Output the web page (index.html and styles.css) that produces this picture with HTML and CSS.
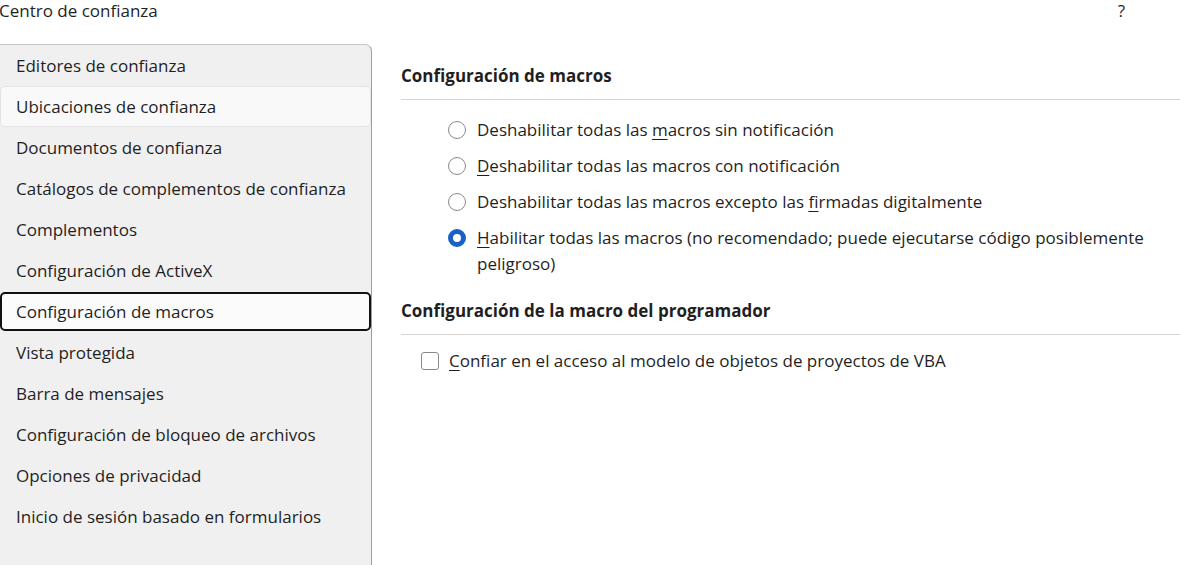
FILE: index.html
```html
<!DOCTYPE html>
<html lang="es">
<head>
<meta charset="utf-8">
<title>Centro de confianza</title>
<link rel="stylesheet" href="styles.css">
</head>
<body>
<div class="window">
  <header class="titlebar">
    <span class="title">Centro de confianza</span>
    <span class="help">?</span>
  </header>
  <div class="content">
    <nav class="sidebar">
      <div class="nav-item">Editores de confianza</div>
      <div class="nav-item hover">Ubicaciones de confianza</div>
      <div class="nav-item">Documentos de confianza</div>
      <div class="nav-item">Catálogos de complementos de confianza</div>
      <div class="nav-item">Complementos</div>
      <div class="nav-item">Configuración de ActiveX</div>
      <div class="nav-item selected">Configuración de macros</div>
      <div class="nav-item">Vista protegida</div>
      <div class="nav-item">Barra de mensajes</div>
      <div class="nav-item">Configuración de bloqueo de archivos</div>
      <div class="nav-item">Opciones de privacidad</div>
      <div class="nav-item">Inicio de sesión basado en formularios</div>
    </nav>
    <main class="main">
      <section class="section">
        <h2 class="section-title">Configuración de macros</h2>
        <div class="radio-list">
          <label class="option"><span class="radio"></span><span class="label">Deshabilitar todas las <u>m</u>acros sin notificación</span></label>
          <label class="option"><span class="radio"></span><span class="label"><u>D</u>eshabilitar todas las macros con notificación</span></label>
          <label class="option"><span class="radio"></span><span class="label">Deshabilitar todas las macros excepto las <u>f</u>irmadas digitalmente</span></label>
          <label class="option"><span class="radio checked"></span><span class="label"><u>H</u>abilitar todas las macros (no recomendado; puede ejecutarse código posiblemente peligroso)</span></label>
        </div>
      </section>
      <section class="section second">
        <h2 class="section-title">Configuración de la macro del programador</h2>
        <div class="check-list">
          <label class="option check-option"><span class="checkbox"></span><span class="label"><u>C</u>onfiar en el acceso al modelo de objetos de proyectos de VBA</span></label>
        </div>
      </section>
    </main>
  </div>
</div>
</body>
</html>
```

FILE: styles.css
```css
* { box-sizing: border-box; }

html, body {
  margin: 0;
  padding: 0;
  background: #ffffff;
}

body {
  font-family: "Open Sans", "Noto Sans", sans-serif;
  font-size: 17px;
  color: #1f1f1f;
  width: 1180px;
  height: 565px;
  overflow: hidden;
}

.window {
  display: flex;
  flex-direction: column;
  height: 565px;
}

.titlebar {
  height: 44px;
  display: flex;
  justify-content: space-between;
  align-items: flex-start;
  padding: 0 55px 0 0;
  line-height: 22px;
}

.title {
  margin-left: -1px;
}

.content {
  display: flex;
  flex: 1;
  min-height: 0;
}

.sidebar {
  width: 372px;
  flex: none;
  background: #f0f0f0;
  border-top: 1px solid #c6c6c6;
  border-right: 1px solid #9e9e9e;
  border-top-right-radius: 7px;
  display: flex;
  flex-direction: column;
}

.nav-item {
  height: 41px;
  padding: 0 15px 1px;
  border: 1px solid transparent;
  border-radius: 5px;
  display: flex;
  align-items: center;
  white-space: nowrap;
}

.nav-item.hover {
  background: #f9f9f9;
  border-color: #e3e3e3;
}

.nav-item.selected {
  background: #fbfbfb;
  border: 2px solid #111111;
  padding-left: 14px;
  height: 39px;
  margin: 1px 0;
}

.main {
  flex: 1;
  padding: 21px 0 0 29px;
}

.section-title {
  margin: 0;
  font-size: 17px;
  font-weight: 700;
  line-height: 22px;
  padding-bottom: 12px;
  border-bottom: 1px solid #d4d4d4;
}

.radio-list {
  padding: 17px 0 0 47px;
  display: flex;
  flex-direction: column;
  gap: 10px;
}

.option {
  display: flex;
  align-items: flex-start;
  line-height: 26px;
}

.radio {
  flex: none;
  width: 18px;
  height: 18px;
  margin-top: 4px;
  border-radius: 50%;
  border: 1.5px solid #8a8a8a;
  background: #ffffff;
  margin-right: 11px;
}

.radio.checked {
  border: 5px solid #1a5fc8;
}

.label u {
  text-underline-offset: 3px;
  text-decoration-thickness: 1px;
}

.second {
  margin-top: 23px;
}

.second .section-title {
  padding-bottom: 12px;
}

.check-list {
  padding: 13px 0 0 20px;
}

.checkbox {
  flex: none;
  width: 18px;
  height: 18px;
  margin-top: 4px;
  border-radius: 3px;
  border: 1.5px solid #8a8a8a;
  background: #ffffff;
  margin-right: 10px;
}
```
